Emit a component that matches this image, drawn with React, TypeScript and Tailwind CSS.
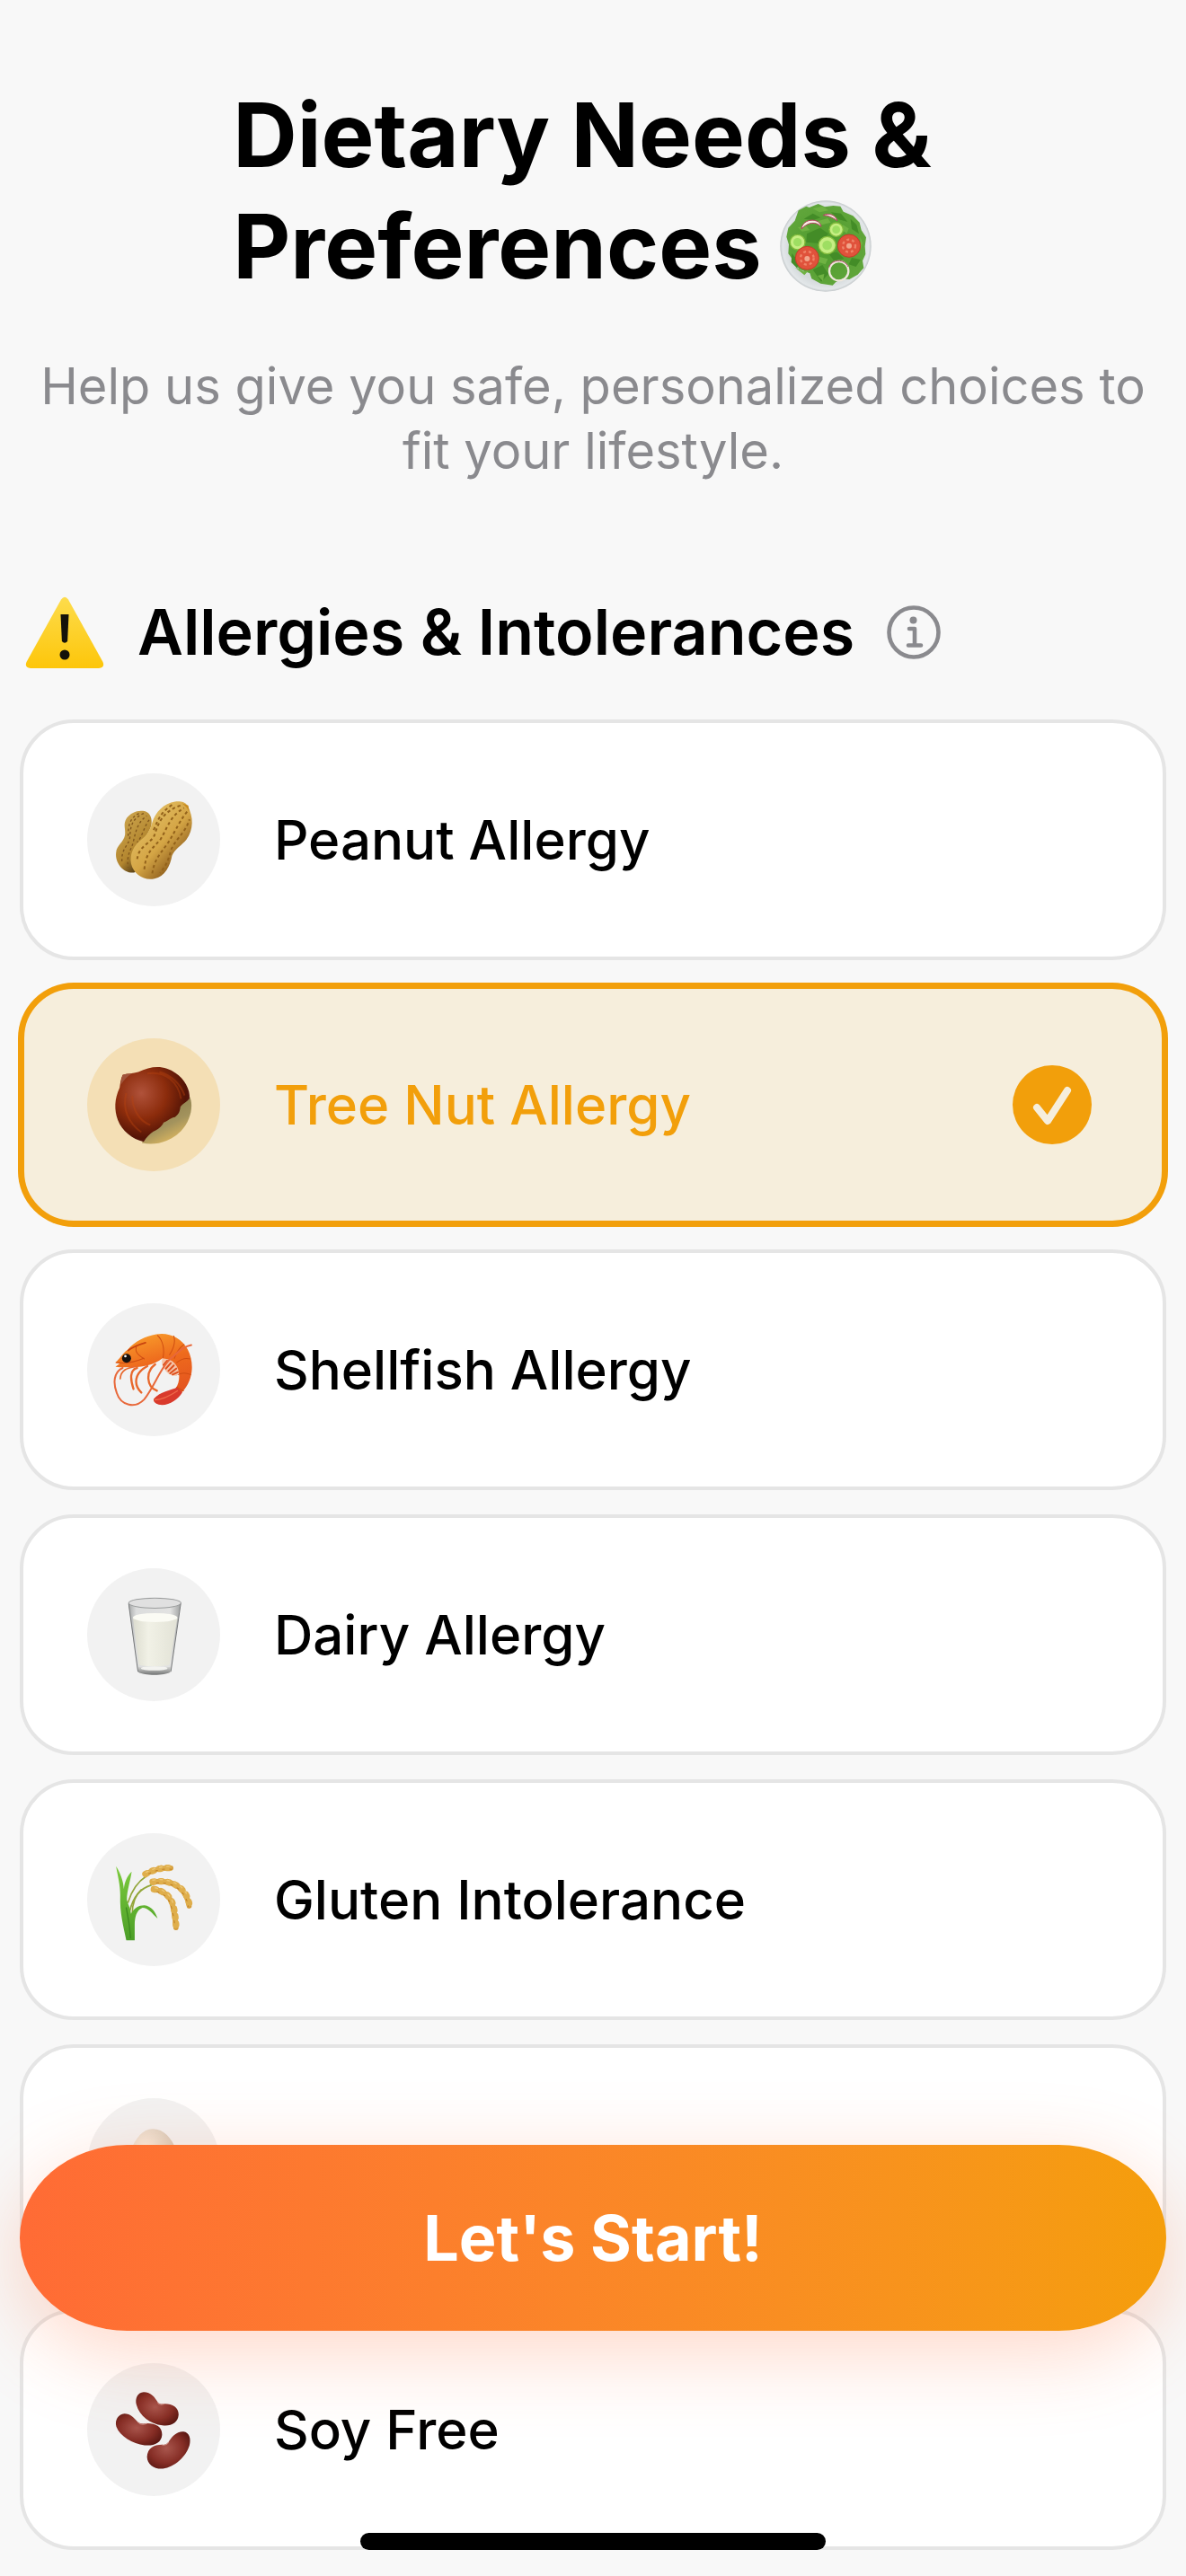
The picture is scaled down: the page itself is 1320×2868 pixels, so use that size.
import { useState, type ReactNode } from "react";

const SaladIcon = () => (
  <svg viewBox="60 38 306 306" className="size-[102px]" aria-hidden="true">
    <defs>
      <radialGradient id="plate">
        <stop offset="0.8" stopColor="#d5dadc" />
        <stop offset="0.95" stopColor="#e3e7e9" />
        <stop offset="1" stopColor="#c3c8ca" />
      </radialGradient>
      <radialGradient id="leaf">
        <stop offset="0" stopColor="#4d9a2c" />
        <stop offset="1" stopColor="#5fa53a" />
      </radialGradient>
    </defs>
    <circle cx="213" cy="191" r="152" fill="url(#plate)" />
    <path
      d="M158 62 l30-12 22 10 28-4 24 2 10 18 32 14 22 22 6 26 16 24-4 30 2 26-10 22 4 24-20 22-28 16-24-2-22 12-10 10-40-6-30-16-6-18-36-14-20-30-16-22 2-30-8-26 6-30 22-24 12-34 26-14z"
      fill="url(#leaf)"
    />
    <g fill="#438c27">
      <path d="M140 100l30-18 26 14-24 8zM230 78l34 4 22 28-30-8zM150 150l44-20 28 20-30 32-44-4zM296 100l20 20 8 30-24-16zM100 215l24 30-6 20-20-20zM170 270l32-16 20 30-24 26zM300 230l30 6-16 24-24-8zM222 215l30-4 22 22-34 6z" />
    </g>
    <g fill="#6fb243">
      <path d="M170 66l32-8 20 14-30 6zM186 108l34-10 10 14-30 8zM120 128l28-4 12 14-26 4zM270 120l20 12-6 16-14-8zM190 226l30 8-8 18-24-8zM110 262l30 14 16-4-14 16zM186 290l22-6-4 24zM328 160l8 20-6 22z" />
    </g>
    <path d="M132 134c4-38 62-38 66-8-18-18-44-16-66 8z" fill="#f6efe6" stroke="#b83f62" strokeWidth="3" />
    <path d="M205 88c18-10 42 0 46 18-14-10-30-18-46-18z" fill="#f6efe6" stroke="#b83f62" strokeWidth="3" />
    <g fill="#c6ee83" stroke="#82bb3c" strokeWidth="4">
      <circle cx="248" cy="136" r="23" />
      <circle cx="119" cy="178" r="25" />
      <circle cx="218" cy="188" r="29" />
    </g>
    <g fill="#9ede62">
      <circle cx="248" cy="136" r="13" />
      <circle cx="119" cy="178" r="14" />
      <circle cx="218" cy="188" r="16" />
    </g>
    <g fill="#e0523b" stroke="#c43c28" strokeWidth="3">
      <circle cx="151" cy="231" r="39" />
      <circle cx="291" cy="190" r="38" />
    </g>
    <g fill="none" stroke="#ee8468" strokeWidth="7" strokeDasharray="9 9">
      <circle cx="151" cy="231" r="22" />
      <circle cx="291" cy="190" r="21" />
    </g>
    <g fill="#f2a68c">
      <circle cx="151" cy="233" r="9" />
      <circle cx="291" cy="190" r="9" />
    </g>
    <circle cx="257" cy="274" r="32" fill="none" stroke="#efe7dc" strokeWidth="7" />
    <path d="M224 262c8-28 52-30 64-2" fill="none" stroke="#b04a6a" strokeWidth="3" />
  </svg>
);

const WarningIcon = () => (
  <svg viewBox="0 0 90 80" className="h-20 w-[90px]" aria-hidden="true">
    <defs>
      <linearGradient id="warn" x1="0" y1="0" x2="0" y2="1">
        <stop offset="0" stopColor="#fddc4c" />
        <stop offset="1" stopColor="#fdc60a" />
      </linearGradient>
    </defs>
    <path d="M41 3.500Q45-2 49 3.500L87.500 73Q90 79.500 83 80H7Q0 79.500 2.500 73Z" fill="url(#warn)" />
    <path d="M40.500 20h9l-1.400 30q-3.100 3.500-6.200 0z" fill="#15120a" />
    <circle cx="45" cy="65" r="5.500" fill="#15120a" />
  </svg>
);

const InfoIcon = () => (
  <svg viewBox="0 0 60 60" className="size-[60px]" fill="none" stroke="#8a8a8e" aria-hidden="true">
    <circle cx="30" cy="30" r="27.500" strokeWidth="4.600" />
    <circle cx="29.500" cy="16.500" r="4" fill="#8a8a8e" stroke="none" />
    <path d="M25 26h6v18M24 44.500h14" strokeWidth="4.600" strokeLinecap="round" strokeLinejoin="round" />
  </svg>
);

const PeanutIcon = () => (
  <svg viewBox="50 61 442 442" className="size-full" aria-hidden="true">
    <defs>
      <linearGradient id="nutFront" x1="0.2" y1="0.2" x2="0.8" y2="0.9">
        <stop offset="0" stopColor="#e2bd62" />
        <stop offset="0.5" stopColor="#d4a545" />
        <stop offset="1" stopColor="#7d4c14" />
      </linearGradient>
      <linearGradient id="nutBack" x1="0" y1="0" x2="0.6" y2="1">
        <stop offset="0" stopColor="#d3ad55" />
        <stop offset="0.7" stopColor="#b3862f" />
        <stop offset="1" stopColor="#4a3512" />
      </linearGradient>
    </defs>
    <path
      d="M236 186c20 2 30 20 28 42-2 28-32 52-38 80-6 30 10 70-20 83-34 4-64-32-60-66 2-26 26-34 30-60 2-24-8-34 6-56 12-16 34-26 54-23z"
      fill="url(#nutBack)"
    />
    <g fill="none" stroke="#80561c" strokeWidth="4" strokeDasharray="8 8">
      <path d="M238 194c-44 20-44 50-46 80-4 30-30 34-26 84" />
      <path d="M248 202c-30 22-36 50-44 84-6 30-24 40-18 88" strokeDashoffset="6" />
      <path d="M222 194c-40 20-34 60-36 80" />
      <path d="M256 216c-16 20-24 60-40 74" />
    </g>
    <path
      d="M342 155c16-2 34 0 42 14 20 36 20 80-4 112-14 18-40 32-48 54-6 34-24 70-58 76-34 8-70-14-78-50-6-32 10-62 34-80 18-14 28-28 36-56 10-34 40-66 76-70z"
      fill="url(#nutFront)"
    />
    <g fill="none" stroke="#93621b" strokeWidth="6" strokeDasharray="10 9">
      <path d="M360 168c-60 20-74 60-86 98-12 30-54 34-58 84" />
      <path d="M372 176c-50 30-56 70-78 104-20 26-50 40-54 102" strokeDashoffset="8" />
      <path d="M382 188c-30 40-44 76-66 108-24 34-44 52-50 102" />
      <path d="M390 214c-12 44-48 66-62 104-8 34-16 50-36 74" strokeDashoffset="6" />
      <path d="M332 166c-44 28-50 62-64 90" />
    </g>
    <path d="M364 160l22 8 4 22c-6-14-14-22-26-30z" fill="#c88a1d" />
  </svg>
);

const ChestnutIcon = () => (
  <svg viewBox="50 48 442 442" className="size-full" aria-hidden="true">
    <defs>
      <radialGradient id="shell" cx="0.35" cy="0.35" r="0.75">
        <stop offset="0" stopColor="#b0523a" />
        <stop offset="0.45" stopColor="#8c2c0c" />
        <stop offset="0.8" stopColor="#541406" />
        <stop offset="1" stopColor="#5e1d25" />
      </radialGradient>
      <linearGradient id="base" x1="0" y1="0" x2="0.5" y2="1">
        <stop offset="0" stopColor="#7d7143" />
        <stop offset="0.7" stopColor="#a3935d" />
        <stop offset="1" stopColor="#d8b45f" />
      </linearGradient>
    </defs>
    <path d="M388 236c18 30 8 84-26 120-36 36-84 50-130 40l20-50 110-90z" fill="url(#base)" />
    <path
      d="M168 170c16-6 34-4 52-10 44-22 88-24 124 4 28 18 50 56 46 84-8 12-20 14-30 28-2 14-4 24-18 34-12 0-22 12-38 18-6 14-20 24-34 30-12 8-24 20-32 34-38-8-72-36-86-72-12-34-12-70 6-108 2-14 4-30 10-42z"
      fill="url(#shell)"
    />
    <path d="M168 170c10-5 20-4 32-5-16 8-28 22-38 38 0-12 2-22 6-33z" fill="#a0533a" />
    <g fill="none" stroke="#b8430f" strokeWidth="6" opacity="0.4">
      <path d="M250 165c60-10 104 30 112 84M180 230c-14 50 6 100 50 130M290 160c40 10 70 40 84 78M200 240c0 44 24 84 60 96" />
    </g>
  </svg>
);

const ShrimpIcon = () => (
  <svg viewBox="50 65 442 442" className="size-full" fill="none" strokeLinecap="round" aria-hidden="true">
    <defs>
      <linearGradient id="shrimp" x1="0.2" y1="0" x2="0.5" y2="1">
        <stop offset="0" stopColor="#f9a02c" />
        <stop offset="0.45" stopColor="#ee6a1d" />
        <stop offset="1" stopColor="#e2501f" />
      </linearGradient>
    </defs>
    <path d="M300 246c14-4 40 14 58 34l-10 26c-16 0-30-4-40-20-8-12-12-22-8-40z" fill="#f4c4a8" />
    <g stroke="#dd4f1d" strokeWidth="6">
      <path d="M316 256l-12 14M328 264l-16 18M338 272l-18 18M346 282l-20 16M352 294l-18 8" />
    </g>
    <path
      d="M144 262c16-14 24-32 40-42 26-30 60-46 96-52 40-8 84 12 104 50 24 46 18 104-18 142-18 26-50 46-78 40-12-4-20-10-16-18 18-20 50-20 72-34 14-20 14-44 8-64-8-24-26-34-52-36-26 22-62 28-96 30-20 0-40 0-60-2l14-10z"
      fill="url(#shrimp)"
    />
    <path d="M350 344c-20 10-60 14-78 40-2 8 4 14 16 18 32 6 62-16 78-40z" fill="#d93a2c" />
    <path d="M276 386c24 0 50-14 74-30" stroke="#ef6a4a" strokeWidth="4" />
    <g stroke="#cf4d12" strokeWidth="3">
      <path d="M284 172c18 16 24 48 18 74M338 174c6 18 0 40-14 62M372 202c-14 10-26 26-32 46M392 250c-14-4-32 2-44 12M394 302c-14-6-30-6-42 0M370 356l-22-12" />
      <path d="M214 206c-6 20 2 30 26 44M146 262c30 4 60 0 92-14" />
    </g>
    <path d="M186 222c18-14 38-20 58-26" stroke="#c8430f" strokeWidth="5" />
    <path
      d="M168 280c-30 14-32 50-20 82 14 44 62 54 92 22 34-42 58-116 96-142 18-18 36-34 60-38"
      stroke="#e8683a"
      strokeWidth="6"
    />
    <g stroke="#e8682c" strokeWidth="7">
      <path d="M208 276c-20 4-46 8-48 40" strokeWidth="5" />
      <path d="M216 280c-26 6-22 40-12 70" />
      <path d="M250 274c-42 22-48 60-20 88" />
      <path d="M276 268c-32 24-30 74 6 88" />
    </g>
    <circle cx="181" cy="248" r="15" fill="#16100e" />
    <circle cx="177" cy="241" r="4" fill="#fff" />
  </svg>
);

const MilkIcon = () => (
  <svg viewBox="50 50 442 442" className="size-full" aria-hidden="true">
    <defs>
      <linearGradient id="milk" x1="0" y1="0" x2="1" y2="0">
        <stop offset="0" stopColor="#dcdccf" />
        <stop offset="0.35" stopColor="#f1f1e6" />
        <stop offset="1" stopColor="#e2e2d6" />
      </linearGradient>
      <linearGradient id="glass" x1="0" y1="0" x2="1" y2="0">
        <stop offset="0" stopColor="#a5a7a7" />
        <stop offset="0.15" stopColor="#dcdddd" />
        <stop offset="0.8" stopColor="#e2e2e1" />
        <stop offset="1" stopColor="#a0a2a2" />
      </linearGradient>
      <linearGradient id="foot" x1="0" y1="0" x2="0" y2="1">
        <stop offset="0" stopColor="#dcdcda" />
        <stop offset="1" stopColor="#707272" />
      </linearGradient>
    </defs>
    <path d="M187 166l31 228c18 14 92 14 110 0l33-228z" fill="url(#glass)" />
    <path d="M202 214l20 156c16 8 86 8 102 0l26-156z" fill="url(#milk)" />
    <ellipse cx="276" cy="214" rx="74" ry="15" fill="#fbfbf4" />
    <path d="M218 376c20 8 90 8 110 0l-2 20c-20 12-84 12-106 0z" fill="url(#foot)" />
    <ellipse cx="273" cy="383" rx="44" ry="7" fill="#f3f3f0" />
    <ellipse cx="275" cy="166" rx="87" ry="17" fill="#e0e0e0" stroke="#9b9d9d" strokeWidth="3" />
    <path d="M188 168l31 226M361 168l-33 226" stroke="#77797a" strokeWidth="3" />
  </svg>
);

const RiceIcon = () => (
  <svg viewBox="50 52 442 442" className="size-full" fill="none" strokeLinecap="round" aria-hidden="true">
    <defs>
      <linearGradient id="stalk" x1="0" y1="0" x2="0" y2="1">
        <stop offset="0" stopColor="#7ccb3c" />
        <stop offset="1" stopColor="#4c9e28" />
      </linearGradient>
    </defs>
    <g stroke="#93a63a" strokeWidth="5">
      <path d="M186 282c12-40 34-70 62-88" />
      <path d="M192 310c10-44 32-74 72-86" />
      <path d="M200 320c0-30 8-60 30-80" />
    </g>
    <path
      d="M146 162c14 22 24 48 26 76 2-22 10-42 26-58-4 32-16 62-16 94 4 14 12 30 14 46 12-20 24-28 44-28 24 2 38 24 44 44-18-18-32-36-50-36-20 8-26 30-26 60v48h-28c-10-50-22-90-20-150 0-34-8-62-14-96z"
      fill="url(#stalk)"
    />
    <path d="M180 300c6 30 12 60 14 100" stroke="#3c8a1f" strokeWidth="4" />
    {/* Grain heads */}
    <g stroke="#d49c3a" strokeWidth="17">
      <path d="M244 188c22-12 50-22 84-20" />
      <path d="M268 214c48-8 90 8 108 42 8 14 12 26 13 38" />
      <path d="M272 238c34 6 54 24 62 54 6 24 9 46 11 74" />
    </g>
    <g stroke="#dfae4c" strokeWidth="22" strokeDasharray="5 20">
      <path d="M244 188c22-12 54-24 88-20" />
      <path d="M268 214c48-8 90 8 110 42 8 16 12 28 12 40" />
      <path d="M272 238c34 6 56 24 64 54 6 24 8 46 10 74" />
    </g>
    <g stroke="#bf7f24" strokeWidth="3" strokeDasharray="7 17" strokeDashoffset="12">
      <path d="M244 192c22-12 54-24 86-20" />
      <path d="M268 219c48-8 86 8 106 42 8 14 10 22 12 34" />
      <path d="M270 244c34 6 54 24 60 54 6 24 10 46 12 68" />
    </g>
    <g stroke="#edc878" strokeWidth="4" strokeDasharray="8 16">
      <path d="M246 182c22-12 50-20 78-20" />
      <path d="M268 208c48-8 92 10 112 44" />
      <path d="M276 234c34 6 56 28 60 56" />
    </g>
  </svg>
);

const EggIcon = () => (
  <svg viewBox="50 50 442 442" className="size-full" aria-hidden="true">
    <defs>
      <radialGradient id="egg" cx="0.35" cy="0.3" r="0.7">
        <stop offset="0" stopColor="#fbf0e2" />
        <stop offset="1" stopColor="#c9bcab" />
      </radialGradient>
    </defs>
    <path d="M268 152c38 0 62 30 78 70 12 28 20 56 20 82 0 56-42 88-95 88s-95-32-95-88c0-26 8-54 20-82 16-40 38-70 72-70z" fill="url(#egg)" />
  </svg>
);

const BeansIcon = () => (
  <svg viewBox="50 69 442 442" className="size-full" aria-hidden="true">
    <defs>
      <radialGradient id="bean" cx="0.45" cy="0.45" r="0.65">
        <stop offset="0" stopColor="#a8564d" />
        <stop offset="0.6" stopColor="#862e26" />
        <stop offset="1" stopColor="#561611" />
      </radialGradient>
    </defs>
    <g fill="url(#bean)">
      <path d="M238 165c24 0 38 18 48 36 6 4 14 4 22 3 26 0 46 12 46 36-2 28-26 40-54 36-40-4-76-32-86-68-6-22 4-42 24-43z" />
      <path d="M174 237c20 0 32 14 46 30 8 4 18 4 30 2 28 0 50 12 49 38-2 28-28 38-58 35-40-6-82-30-94-62-6-20 6-42 27-43z" />
      <path d="M370 297c20 2 26 24 20 46-12 38-50 72-88 77-30 2-52-14-53-40 2-28 22-40 50-40 8 2 14 0 20-6 12-20 28-38 51-37z" />
    </g>
    <g fill="none" stroke="#c98a80" strokeWidth="3" strokeLinecap="round">
      <path d="M284 200c4 8 14 8 22 5M220 266c6 8 18 8 28 4M300 341c8 2 16-2 20-8" />
    </g>
  </svg>
);

const CheckIcon = () => (
  <svg viewBox="0 0 88 88" className="size-[88px] shrink-0" aria-hidden="true">
    <circle cx="44" cy="44" r="44" fill="#f29f0b" />
    <path
      d="M27 47l12 15L61 28"
      fill="none"
      stroke="#f6eedc"
      strokeWidth="8"
      strokeLinecap="round"
      strokeLinejoin="round"
    />
  </svg>
);

const allergies: { id: string; label: string; icon: ReactNode }[] = [
  { id: "peanut", label: "Peanut Allergy", icon: <PeanutIcon /> },
  { id: "treeNut", label: "Tree Nut Allergy", icon: <ChestnutIcon /> },
  { id: "shellfish", label: "Shellfish Allergy", icon: <ShrimpIcon /> },
  { id: "dairy", label: "Dairy Allergy", icon: <MilkIcon /> },
  { id: "gluten", label: "Gluten Intolerance", icon: <RiceIcon /> },
  { id: "egg", label: "Egg Allergy", icon: <EggIcon /> },
  { id: "soy", label: "Soy Free", icon: <BeansIcon /> },
];

export default function App() {
  const [selected, setSelected] = useState<string[]>(["treeNut"]);

  const toggle = (id: string) =>
    setSelected((prev) => (prev.includes(id) ? prev.filter((s) => s !== id) : [...prev, id]));

  return (
    <div className="relative h-screen overflow-hidden bg-[#f8f8f8] font-['Inter','Liberation_Sans',sans-serif] text-black">
      <main className="h-full overflow-y-auto px-[22px] pt-[88px] [scrollbar-width:none]">
        {/* Title */}
        <header>
          <h1 className="mx-auto w-fit pr-6 text-[99px] font-bold leading-[124px]">
            Dietary Needs &amp;
            <span className="flex items-center gap-5">
              Preferences <SaladIcon />
            </span>
          </h1>
          <p className="mt-[58px] text-center text-[56px] leading-[72px] text-[#8a8a8e]">
            Help us give you safe, personalized choices to
            <br />
            fit your lifestyle.
          </p>
        </header>

        {/* Allergies */}
        <section>
          <div className="mt-[122px] flex items-center gap-9 pl-[5px]">
            <WarningIcon />
            <h2 className="text-[70px] font-semibold leading-[88px]">Allergies &amp; Intolerances</h2>
            <button type="button" aria-label="About allergies">
              <InfoIcon />
            </button>
          </div>

          <div className="mt-[53px] flex flex-col gap-[27px]">
            {allergies.map(({ id, label, icon }) => {
              const active = selected.includes(id);
              return (
                <label
                  key={id}
                  className={`relative flex h-[268px] items-center rounded-[60px] ${
                    active
                      ? "border-[5px] border-[#f29f0b] bg-[#f6eedc] pl-[70px] pr-[78px] text-[#f29f0b] ring-2 ring-[#f29f0b]"
                      : "border-4 border-[#e5e5e5] bg-white pl-[71px] pr-[79px]"
                  }`}
                >
                  <input
                    type="checkbox"
                    className="sr-only"
                    checked={active}
                    onChange={() => toggle(id)}
                  />
                  <span
                    className={`size-[148px] shrink-0 overflow-hidden rounded-full ${
                      active ? "bg-[#f4dfb5]" : "bg-[#f2f2f2]"
                    }`}
                  >
                    {icon}
                  </span>
                  <span className="ml-[60px] flex-1 text-[60px] font-medium leading-[72px]">
                    {label}
                  </span>
                  {active && <CheckIcon />}
                </label>
              );
            })}
          </div>
        </section>
      </main>

      {/* Floating footer */}
      <div className="absolute inset-x-0 bottom-0 flex flex-col items-center px-[22px] pb-[29px]">
        <button
          type="button"
          className="h-[207px] w-full rounded-[120px/104px] bg-linear-to-r from-[#ff6b35] to-[#f59e0b] text-[70px] font-bold text-white shadow-[0_24px_90px_rgba(255,107,53,0.27)]"
        >
          Let&apos;s Start!
        </button>
        <div className="mt-[225px] h-[19px] w-[518px] rounded-full bg-black" />
      </div>
    </div>
  );
}
